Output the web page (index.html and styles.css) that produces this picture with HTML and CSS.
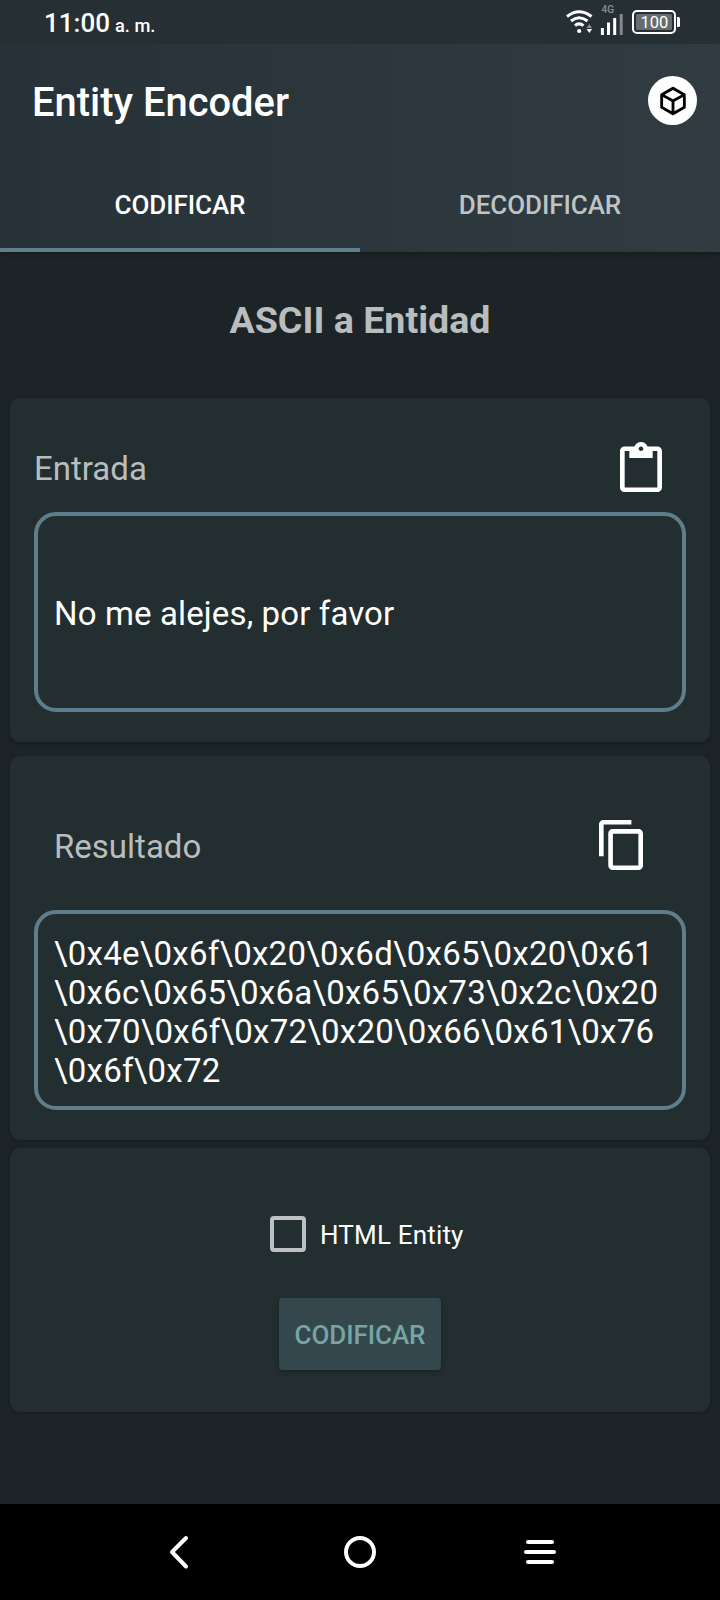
FILE: index.html
```html
<!DOCTYPE html>
<html lang="es">
<head>
<meta charset="utf-8">
<title>Entity Encoder</title>
<link rel="stylesheet" href="styles.css">
</head>
<body>
<div class="status">
  <span class="time">11:00</span><span class="ampm">a. m.</span>
  <svg class="status-icons" width="120" height="44" viewBox="560 0 120 44">
    <g fill="none" stroke="#fff" stroke-width="3">
      <path d="M567 16.500Q579 7 591.500 16.500"/>
      <path d="M571 21Q579 14.500 587.500 21"/>
      <path d="M575 25.700Q579 22 583.500 25.700"/>
    </g>
    <circle cx="579.200" cy="31" r="2.100" fill="#fff"/>
    <path d="M589.300 24l2.800 4h-5.600z" fill="#899092"/>
    <path d="M589.300 33l2.800-4h-5.600z" fill="#fff"/>
    <g stroke-width="3" stroke-linecap="butt" stroke="#fff">
      <path d="M602.400 28v7M608.500 22.500v12.500M614.700 18v17"/>
      <path d="M621.200 14v21" stroke="#848b8d"/>
    </g>
    <text class="net" x="601.500" y="13">4G</text>
    <rect x="633" y="11" width="42" height="22" rx="4" fill="none" stroke="#fff" stroke-width="2"/>
    <rect x="636" y="14" width="36" height="16" rx="1.500" fill="#656d6f"/>
    <path d="M677 17h1.500q1.500 0 1.500 1.500v7q0 1.500-1.500 1.500h-1.500z" fill="#fff"/>
    <text class="level" x="640.500" y="28">100</text>
  </svg>
</div>
<header class="header">
  <div class="toolbar">
    <h1 class="title">Entity Encoder</h1>
    <div class="logo">
      <svg width="34" height="34" viewBox="0 0 24 24"><path d="M21 16.500c0 .38-.21.71-.53.88l-7.900 4.440c-.16.120-.36.180-.57.180s-.41-.060-.57-.180l-7.900-4.440A.99.99 0 0 1 3 16.500v-9c0-.38.210-.71.530-.88l7.900-4.440c.16-.120.360-.180.570-.180s.41.060.570.180l7.900 4.440c.32.170.530.500.530.880v9M12 4.150 6.040 7.500 12 10.850l5.960-3.350L12 4.150M5 15.910l6 3.380v-6.710L5 9.210v6.700m14 0v-6.700l-6 3.370v6.710l6-3.380z"/></svg>
    </div>
  </div>
  <nav class="tabs">
    <div class="tab tab-active"><span>CODIFICAR</span></div>
    <div class="tab"><span>DECODIFICAR</span></div>
  </nav>
</header>
<main class="content">
  <h2 class="heading">ASCII a Entidad</h2>
  <section class="card card-input">
    <div class="row row-input">
      <span class="label">Entrada</span>
      <svg class="icon-paste" width="42" height="50" viewBox="3 0 18 22" preserveAspectRatio="none"><path fill="#fff" d="M19 2h-4.180C14.400.84 13.300 0 12 0S9.600.84 9.180 2H5c-1.100 0-2 .9-2 2v16c0 1.100.9 2 2 2h14c1.100 0 2-.9 2-2V4c0-1.100-.9-2-2-2zm-7 0c.55 0 1 .45 1 1s-.45 1-1 1-1-.45-1-1 .45-1 1-1zm7 18H5V4h2v3h10V4h2v16z"/></svg>
    </div>
    <div class="field"><span class="line">No me alejes, por favor</span></div>
  </section>
  <section class="card card-result">
    <div class="row row-result">
      <span class="label">Resultado</span>
      <svg class="icon-copy" width="44" height="50" viewBox="2 1 19 22" preserveAspectRatio="none"><path fill="#fff" d="M16 1H4c-1.100 0-2 .9-2 2v14h2V3h12V1zm3 4H8c-1.100 0-2 .9-2 2v14c0 1.100.9 2 2 2h11c1.100 0 2-.9 2-2V7c0-1.100-.9-2-2-2zm0 16H8V7h11v14z"/></svg>
    </div>
    <div class="field field-result">
      <span class="line">\0x4e\0x6f\0x20\0x6d\0x65\0x20\0x61</span>
      <span class="line">\0x6c\0x65\0x6a\0x65\0x73\0x2c\0x20</span>
      <span class="line">\0x70\0x6f\0x72\0x20\0x66\0x61\0x76</span>
      <span class="line">\0x6f\0x72</span>
    </div>
  </section>
  <section class="card card-action">
    <div class="check"><span class="box"></span><span class="check-label">HTML Entity</span></div>
    <div class="button"><span>CODIFICAR</span></div>
  </section>
</main>
<footer class="navbar">
  <svg width="720" height="96" viewBox="0 0 720 96" fill="none" stroke="#fff" stroke-width="4" stroke-linecap="round" stroke-linejoin="round">
    <path d="M186 34 172 48l14 14.500"/>
    <circle cx="360" cy="48" r="14"/>
    <path d="M528 38h24M526 48h28M528 58h24"/>
  </svg>
</footer>
</body>
</html>
```
FILE: styles.css
```css
* { box-sizing: border-box; margin: 0; padding: 0; }
body {
  width: 720px;
  height: 1600px;
  display: flex;
  flex-direction: column;
  background: #1d2427;
  color: #fff;
  font-family: Roboto, sans-serif;
  overflow: hidden;
}
span, h1, h2 { white-space: nowrap; }
.status {
  height: 44px;
  background: #263034;
  display: flex;
  align-items: baseline;
  padding-left: 44px;
  font-weight: 500;
  position: relative;
  z-index: 1;
}
.time { font-size: 26px; line-height: 46px; }
.ampm { font-size: 18.3px; margin-left: 5px; }
.status-icons { margin-left: auto; margin-right: 40px; align-self: flex-start; }
.net { font-size: 10px; fill: #899092; font-weight: 500; }
.level { font-size: 16.5px; fill: #fff; font-weight: 400; }
.header {
  height: 208px;
  background: linear-gradient(90deg, #273238, #303c42);
  box-shadow: 0 1px 6px rgba(0, 0, 0, .35);
}
.toolbar {
  height: 112px;
  display: flex;
  align-items: center;
  justify-content: space-between;
  padding: 1px 23px 0 32px;
}
.title { font-size: 39.9px; font-weight: 500; line-height: 48px; padding-top: 5px; }
.logo {
  width: 49px;
  height: 49px;
  border-radius: 50%;
  background: #fff;
  display: flex;
  align-items: center;
  justify-content: center;
}
.tabs { height: 96px; display: flex; }
.tab {
  flex: 1;
  display: flex;
  justify-content: center;
  border-bottom: 4px solid transparent;
  color: #bfc3c4;
  font-size: 26px;
  letter-spacing: -0.08px;
  font-weight: 500;
  line-height: 98px;
}
.tab-active { color: #fff; border-color: #607d8b; }
.content { flex: 1; padding: 0 10px; }
.heading {
  height: 146px;
  padding-top: 43px;
  text-align: center;
  font-size: 37.6px;
  font-weight: 700;
  line-height: 51px;
  color: #b9bdbe;
}
.card {
  background: #232e30;
  border-radius: 10px;
  box-shadow: 0 2px 4px rgba(0, 0, 0, .22);
  padding: 0 24px;
}
.card-input { height: 344px; margin-bottom: 14px; }
.card-result { height: 384px; margin-bottom: 8px; }
.row { display: flex; justify-content: space-between; color: #b9bdbe; }
.row-input { height: 114px; padding: 44px 24px 0 0; }
.row-result { height: 154px; padding: 64px 43px 0 20px; }
.label { font-size: 33px; line-height: 54px; }
.field {
  height: 200px;
  border: 4px solid #607d8b;
  border-radius: 22px;
  padding: 2px 16px 0;
  display: flex;
  flex-direction: column;
  justify-content: center;
}
.line { font-size: 33px; line-height: 39px; letter-spacing: 0.13px; }
.field-result { padding-top: 4px; }
.field-result .line { letter-spacing: 0.24px; }
.card-action {
  height: 264px;
  display: flex;
  flex-direction: column;
  align-items: center;
  padding-top: 68px;
}
.check {
  height: 36px;
  width: 194px;
  display: flex;
  align-items: center;
  margin-left: 14px;
}
.box { flex: none; width: 36px; height: 36px; border: 4px solid #bdc1c1; border-radius: 4px; }
.check-label { margin-left: 14px; padding-top: 2px; font-size: 26px; line-height: 36px; letter-spacing: 0.18px; }
.button {
  width: 162px;
  height: 72px;
  margin-top: 46px;
  border-radius: 4px;
  background: #34474c;
  color: #78a5a3;
  box-shadow: 0 3px 5px rgba(0, 0, 0, .25);
  font-size: 26px;
  letter-spacing: -0.08px;
  font-weight: 500;
  line-height: 75px;
  display: flex;
  justify-content: center;
}
.navbar { height: 96px; background: #000; }
.navbar svg { display: block; }
```
